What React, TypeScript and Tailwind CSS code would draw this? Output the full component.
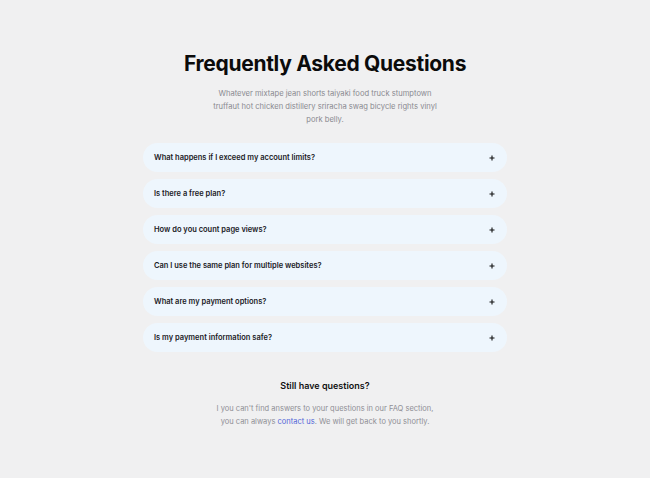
const faqs = [
  "What happens if I exceed my account limits?",
  "Is there a free plan?",
  "How do you count page views?",
  "Can I use the same plan for multiple websites?",
  "What are my payment options?",
  "Is my payment information safe?",
];

function PlusIcon() {
  return (
    <svg width="6" height="6" viewBox="0 0 6 6" className="text-[#111]">
      <path d="M3 0.5v5M0.5 3h5" stroke="currentColor" strokeWidth="1.1" />
    </svg>
  );
}

export default function App() {
  return (
    <div className="min-h-screen w-full bg-[#f0f0f1] font-['Inter',sans-serif] flex flex-col items-center pt-[50px]">
      <h1 className="text-[21px] leading-[28px] font-bold tracking-[-0.3px] text-[#0b0b0b]">
        Frequently Asked Questions
      </h1>
      <p className="mt-[9px] w-[232px] text-center text-[7.6px] leading-[13px] text-[#8a8a90]">
        Whatever mixtape jean shorts taiyaki food truck stumptown truffaut hot chicken distillery sriracha swag bicycle rights vinyl
        pork belly.
      </p>

      <div className="mt-[17px] w-[364px] flex flex-col gap-[7px]">
        {faqs.map((q) => (
          <div
            key={q}
            className="h-[29px] rounded-full bg-[#eef6fd] flex items-center justify-between pl-[11px] pr-[12px]"
          >
            <span className="text-[7.5px] font-semibold text-[#1a1a1f]">{q}</span>
            <PlusIcon />
          </div>
        ))}
      </div>

      <h2 className="mt-[27px] text-[9px] leading-[14px] font-semibold text-[#111]">Still have questions?</h2>
      <div className="mt-[9px] flex flex-col items-center text-[7.5px] leading-[13px] text-[#8f8f95]">
        <p>I you can't find answers to your questions in our FAQ section,</p>
        <p>
          you can always <a href="#" className="text-[#5266d8]">contact us</a>. We will get back to you shortly.
        </p>
      </div>
    </div>
  );
}
